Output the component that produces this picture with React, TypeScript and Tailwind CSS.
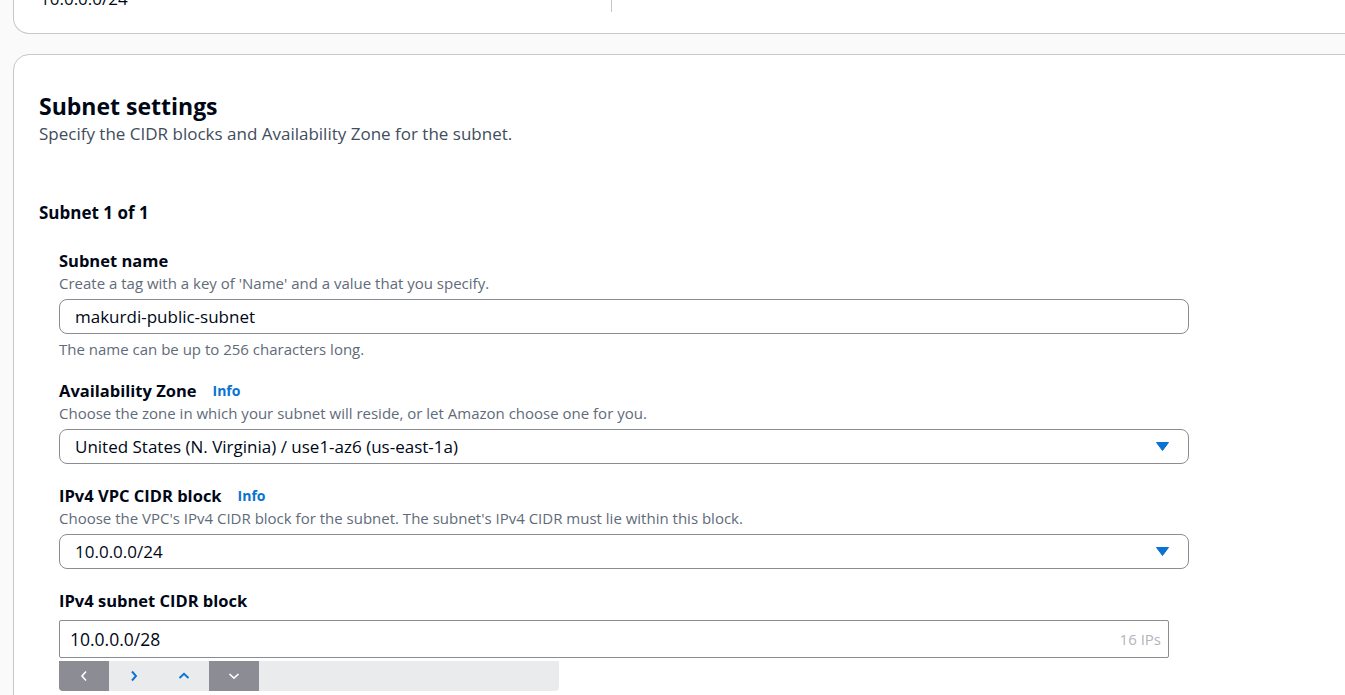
import React from "react";

const font = { fontFamily: '"Open Sans", "Noto Sans", Arial, sans-serif' };

function Caret() {
  return (
    <svg width="13" height="9" viewBox="0 0 13 9" className="shrink-0">
      <path d="M0.5 0.5 H12.5 L6.5 8.5 Z" fill="#0972d3" stroke="#0972d3" strokeLinejoin="round" />
    </svg>
  );
}

function Label({ children, info }: { children: React.ReactNode; info?: boolean }) {
  return (
    <div className="flex items-center h-[22px] text-[16.5px] font-bold text-[#000716] leading-[22px]">
      <span>{children}</span>
      {info && <span className="ml-[16px] text-[14px] font-bold text-[#0972d3]">Info</span>}
    </div>
  );
}

function Desc({ children }: { children: React.ReactNode }) {
  return <div className="text-[15px] leading-[22px] text-[#5f6b7a]">{children}</div>;
}

function Select({ value }: { value: string }) {
  return (
    <div className="w-[1130px] h-[35px] border border-[#8c8c94] rounded-[8px] flex items-center pl-[15px] pr-[19px] justify-between bg-white">
      <span className="text-[17px] text-[#000716]">{value}</span>
      <Caret />
    </div>
  );
}

export default function App() {
  return (
    <div className="w-[1345px] h-[695px] overflow-hidden bg-[#fafafa]" style={font}>
      {/* top card (cut off) */}
      <div className="ml-[13px] mr-[-40px] h-[34px] bg-white border border-t-0 border-[#c6c6cd] rounded-b-[16px] flex">
        <div className="w-[597px] relative">
          <span className="absolute left-[26px] top-[-13px] text-[17px] leading-[24px] text-[#000716]">10.0.0.0/24</span>
        </div>
        <div className="border-l border-[#c6c6cd] h-[12px]" />
      </div>

      {/* Subnet settings card */}
      <div className="ml-[13px] mr-[-40px] mt-[20px] h-[700px] bg-white border border-[#c6c6cd] rounded-t-[16px] pl-[25px] pt-[36px]">
        <h2 className="text-[23px] leading-[30px] font-bold text-[#000716]">Subnet settings</h2>
        <p className="mt-[2px] text-[17px] leading-[22px] text-[#414d5c]">
          Specify the CIDR blocks and Availability Zone for the subnet.
        </p>

        <div className="mt-[57px] text-[17px] leading-[22px] font-bold text-[#000716]">Subnet 1 of 1</div>

        <div className="pl-[20px]">
          <div className="mt-[26px]">
            <Label>Subnet name</Label>
            <Desc>Create a tag with a key of 'Name' and a value that you specify.</Desc>
            <div className="mt-[5px] w-[1130px] h-[35px] border border-[#8c8c94] rounded-[8px] flex items-center pl-[15px]">
              <span className="text-[17px] text-[#000716]">makurdi-public-subnet</span>
            </div>
            <div className="mt-[4px]">
              <Desc>The name can be up to 256 characters long.</Desc>
            </div>
          </div>

          <div className="mt-[20px]">
            <Label info>Availability Zone</Label>
            <Desc>Choose the zone in which your subnet will reside, or let Amazon choose one for you.</Desc>
            <div className="mt-[5px]">
              <Select value="United States (N. Virginia) / use1-az6 (us-east-1a)" />
            </div>
          </div>

          <div className="mt-[21px]">
            <Label info>IPv4 VPC CIDR block</Label>
            <Desc>Choose the VPC's IPv4 CIDR block for the subnet. The subnet's IPv4 CIDR must lie within this block.</Desc>
            <div className="mt-[5px]">
              <Select value="10.0.0.0/24" />
            </div>
          </div>

          <div className="mt-[21px]">
            <Label>IPv4 subnet CIDR block</Label>
            <div className="mt-[8px] w-[1110px] h-[38px] border border-[#8c8c94] rounded-[2px] flex items-center justify-between pl-[10px] pr-[7px]">
              <span className="text-[17.5px] text-[#000716]">10.0.0.0/28</span>
              <span className="text-[15px] text-[#b4b4bb]">16 IPs</span>
            </div>
            <div className="mt-[3px] w-[500px] h-[30px] bg-[#e9ebed] rounded-b-[4px] flex overflow-hidden">
              <div className="w-[50px] h-full bg-[#8c8c94] flex items-center justify-center">
                <svg width="10" height="14" viewBox="0 0 10 14"><path d="M7 2.5 L3 7 L7 11.5" fill="none" stroke="#ffffff" strokeWidth="1.6" /></svg>
              </div>
              <div className="w-[50px] h-full flex items-center justify-center">
                <svg width="10" height="14" viewBox="0 0 10 14"><path d="M3 2.5 L7 7 L3 11.5" fill="none" stroke="#0972d3" strokeWidth="1.9" /></svg>
              </div>
              <div className="w-[50px] h-full flex items-center justify-center">
                <svg width="14" height="10" viewBox="0 0 14 10"><path d="M2.5 7 L7 2.8 L11.5 7" fill="none" stroke="#0972d3" strokeWidth="1.9" /></svg>
              </div>
              <div className="w-[50px] h-full bg-[#8c8c94] flex items-center justify-center">
                <svg width="14" height="10" viewBox="0 0 14 10"><path d="M2.5 3 L7 7.2 L11.5 3" fill="none" stroke="#ffffff" strokeWidth="1.6" /></svg>
              </div>
            </div>
          </div>
        </div>
      </div>
    </div>
  );
}
